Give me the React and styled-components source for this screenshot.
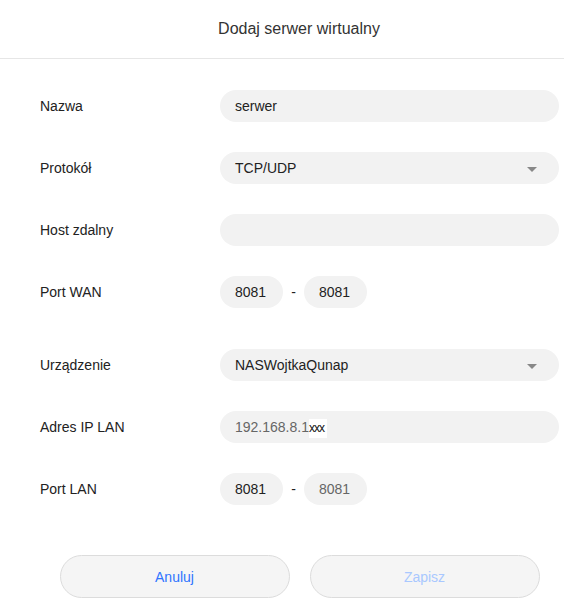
import React from "react";
import styled, { createGlobalStyle } from "styled-components";

const Global = createGlobalStyle`
  html, body { margin: 0; padding: 0; background: #fff; overflow: hidden; }
  body { font-family: "Liberation Sans", Arial, sans-serif; }
`;

const Viewport = styled.div`
  width: 564px;
  height: 603px;
  overflow: hidden;
`;

const Dialog = styled.div`
  width: 598px;
  background: #fff;
  color: #333;
`;

const Header = styled.div`
  height: 59px;
  border-bottom: 1px solid #e6e6e6;
  display: flex;
  align-items: center;
  justify-content: center;
  font-size: 16px;
  color: #333;
  padding-bottom: 1px;
  box-sizing: border-box;
`;

const Form = styled.div`
  padding: 31px 39px 0 40px;
  display: flex;
  flex-direction: column;
`;

const Row = styled.div`
  display: flex;
  align-items: center;
  height: 32px;
  margin-bottom: ${(p) => p.$gap ?? 30}px;
`;

const Label = styled.div`
  width: 180px;
  flex: none;
  font-size: 14px;
  color: #222;
`;

const Field = styled.div`
  flex: 1;
  height: 32px;
  border-radius: 16px;
  background: #f2f2f2;
  display: flex;
  align-items: center;
  padding: 0 22px 0 15px;
  font-size: 14px;
  color: ${(p) => (p.$muted ? "#666" : "#222")};
  box-sizing: border-box;
  justify-content: space-between;
`;

const Arrow = styled.span`
  width: 0;
  height: 0;
  border-left: 5px solid transparent;
  border-right: 5px solid transparent;
  border-top: 5px solid #888;
  margin-top: 2px;
`;

const PortGroup = styled.div`
  display: flex;
  align-items: center;
`;

const Port = styled.div`
  width: 63px;
  height: 32px;
  border-radius: 16px;
  background: #f2f2f2;
  display: flex;
  align-items: center;
  padding-left: 15px;
  box-sizing: border-box;
  font-size: 14px;
  color: ${(p) => (p.$muted ? "#666" : "#222")};
`;

const Dash = styled.span`
  width: 21px;
  text-align: center;
  font-size: 14px;
  color: #222;
`;

const IpText = styled.span`
  display: flex;
  align-items: center;
`;

const Redact = styled.span`
  background: #fff;
  color: #111;
  font-size: 12px;
  letter-spacing: -1px;
  height: 19px;
  width: 18px;
  display: flex;
  align-items: center;
  margin-top: 2px;
`;

const Footer = styled.div`
  display: flex;
  justify-content: center;
  gap: 20px;
  padding: 50px 39px 0 40px;
`;

const Button = styled.button`
  width: 230px;
  height: 43px;
  border-radius: 22px;
  border: 1px solid #dcdcdc;
  background: #f5f5f5;
  font-family: "Liberation Sans", Arial, sans-serif;
  font-size: 14px;
  color: ${(p) => (p.$disabled ? "#a9c8ff" : "#2f74ff")};
  cursor: pointer;
`;

export default function App() {
  return (
    <>
      <Global />
      <Viewport>
        <Dialog>
          <Header>Dodaj serwer wirtualny</Header>
          <Form>
            <Row>
              <Label>Nazwa</Label>
              <Field>serwer</Field>
            </Row>
            <Row>
              <Label>Protokół</Label>
              <Field>
                TCP/UDP
                <Arrow />
              </Field>
            </Row>
            <Row>
              <Label>Host zdalny</Label>
              <Field />
            </Row>
            <Row $gap={41}>
              <Label>Port WAN</Label>
              <PortGroup>
                <Port>8081</Port>
                <Dash>-</Dash>
                <Port>8081</Port>
              </PortGroup>
            </Row>
            <Row>
              <Label>Urządzenie</Label>
              <Field>
                NASWojtkaQunap
                <Arrow />
              </Field>
            </Row>
            <Row>
              <Label>Adres IP LAN</Label>
              <Field $muted>
                <IpText>
                  192.168.8.1<Redact>xxx</Redact>
                </IpText>
              </Field>
            </Row>
            <Row $gap={0}>
              <Label>Port LAN</Label>
              <PortGroup>
                <Port>8081</Port>
                <Dash>-</Dash>
                <Port $muted>8081</Port>
              </PortGroup>
            </Row>
          </Form>
          <Footer>
            <Button>Anuluj</Button>
            <Button $disabled>Zapisz</Button>
          </Footer>
        </Dialog>
      </Viewport>
    </>
  );
}
